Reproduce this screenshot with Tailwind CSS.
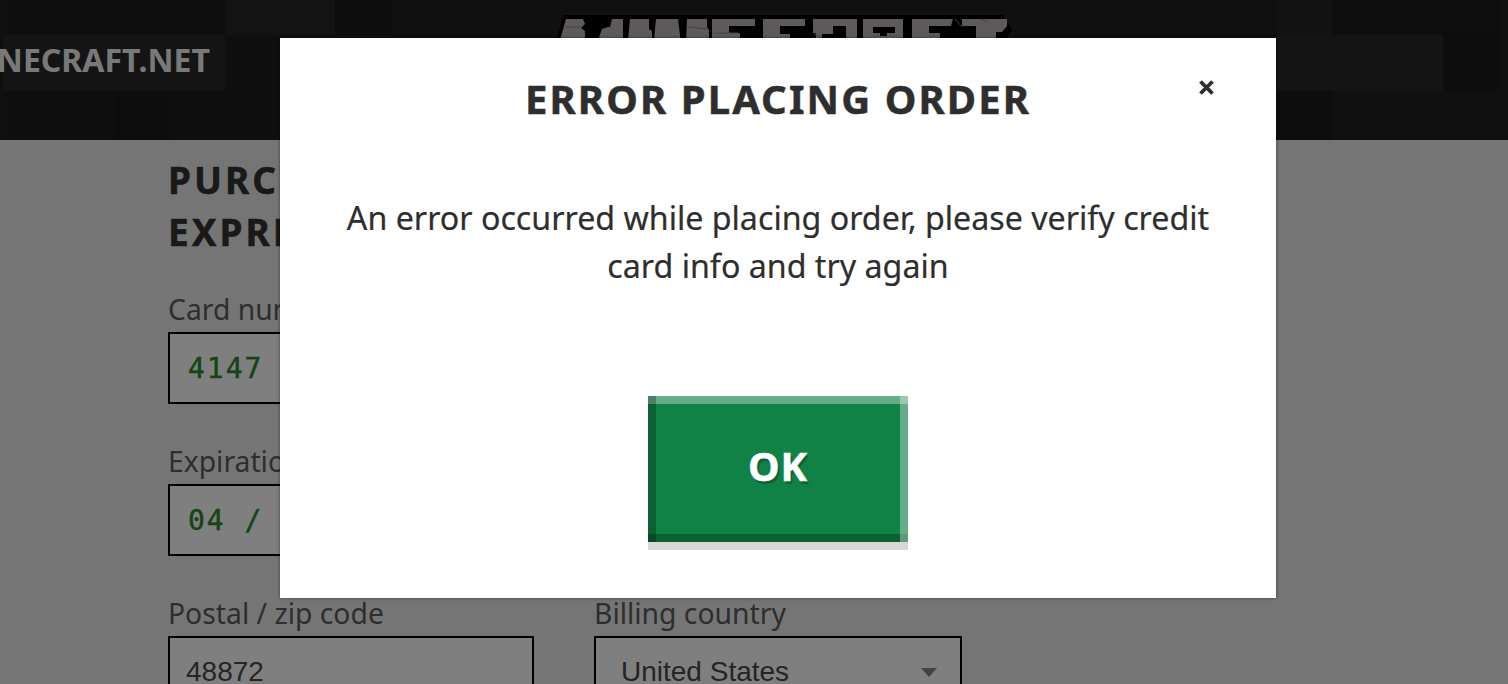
<!doctype html>
<html><head><meta charset="utf-8"><script src="https://cdn.jsdelivr.net/npm/@tailwindcss/browser@4"></script></head>
<body class="m-0">
<div class="relative w-[1508px] h-[684px] overflow-hidden bg-[#ecebeb] font-['Noto_Sans','Open_Sans',sans-serif]">
  <header class="relative h-[140px] bg-[#202020] overflow-hidden">
    <div class="absolute left-[3px] top-[-21px] grid grid-cols-[repeat(27,55.4px)] grid-rows-[repeat(3,56px)]">
      <div class="col-span-4 bg-[#1f1f1f]"></div><div class="col-span-2 bg-[#262626]"></div><div class="bg-[#1a1a1a]"></div><div class="col-span-16 bg-[#202020]"></div><div class="bg-[#252525]"></div><div class="col-span-3 bg-[#1c1c1c]"></div>
      <div class="col-span-4 bg-[#282828]"></div><div class="col-span-19 bg-[#1e1e1e]"></div><div class="col-span-3 bg-[#292929]"></div><div class="bg-[#1a1a1a]"></div>
      <div class="col-span-2 bg-[#1e1e1e]"></div><div class="bg-[#1a1a1a]"></div><div class="col-span-20 bg-[#1f1f1f]"></div><div class="bg-[#1b1b1b]"></div><div class="col-span-3 bg-[#212121]"></div>
    </div>
    <span class="absolute right-[1298px] top-[38px] text-[32px] leading-[44px] font-bold text-[#f2f2f2] whitespace-nowrap">MINECRAFT.NET</span>
    <svg class="absolute left-[550px] top-[8px]" width="470" height="32" viewBox="0 0 470 32" aria-hidden="true">
      <path fill="#000" d="M7 32L13 7H453L462 22L455 32Z"/>
      <g fill="#bcb5b2">
        <path d="M10 32L16 11H33L35 16L31 20L35 23V32Z"/>
        <path d="M48 32L52 21L58 19H60L62 11H73V32Z"/>
        <path d="M78 32L80 11H99V21L102 23V32Z"/>
        <path d="M104 32L106 11H128L130 27V32Z"/>
        <path d="M136 32L137 11H157V19L159 22V32Z"/>
        <path d="M162 32V11H205V18H179V25H190V32Z"/>
        <path d="M213 32V11H255V18H230V26H240V32Z"/>
        <path d="M263 19V11H272V32H266V25H263ZM272 11H307V32H296V18H283V26H272Z"/>
        <path fill-rule="evenodd" d="M313 32V11H353V32ZM323 19V25H330V28H337V25H345V19Z"/>
        <path d="M362 32V11H403L401 18H379V25H390V32Z"/>
        <path d="M412 18V11H457V18L452 24H446V32H426V18Z"/>
      </g>
      <g fill="none" stroke="#8a8381" stroke-width="1"><path d="M16 19H30M138 19L158 21M163 25H188M264 26L272 30M405 11L412 19M430 11L438 14"/></g>
    </svg>
  </header>
  <main class="w-[1172px] ml-[168px] pt-[14px] text-[#333]">
    <h1 class="w-[700px] text-[37px] leading-[52px] font-bold tracking-[3px] [-webkit-text-stroke:0.5px_#333]">PURCHASE WITH CREDIT CARD<br>EXPRESS CHECKOUT</h1>
    <label class="block mt-[31px] text-[28.3px] leading-[40px] text-[#5c5c5c]">Card number</label>
    <div class="mt-[3px] w-[794px] h-[72px] border-2 border-black bg-white pl-[18px] pt-[2px] flex items-center font-['DejaVu_Sans_Mono',monospace] text-[28px] tracking-[2px] text-[#2a8a2a] [-webkit-text-stroke:0.4px_#2a8a2a]">4147 2023 0000 0000</div>
    <label class="block mt-[37px] text-[28.3px] leading-[40px] text-[#5c5c5c]">Expiration date</label>
    <div class="mt-[3px] w-[794px] h-[72px] border-2 border-black bg-white pl-[18px] pt-[2px] flex items-center font-['DejaVu_Sans_Mono',monospace] text-[28px] tracking-[2px] text-[#2a8a2a] [-webkit-text-stroke:0.4px_#2a8a2a]">04 / 24</div>
    <div class="flex gap-[60px] mt-[37px]">
      <div class="w-[366px]">
        <label class="block text-[28.3px] leading-[40px] text-[#5c5c5c]">Postal / zip code</label>
        <div class="mt-[3px] h-[72px] border-2 border-black bg-white px-[16px] flex items-center font-['Liberation_Sans',sans-serif] text-[28px] text-[#4a4a4a]">48872</div>
      </div>
      <div class="w-[368px]">
        <label class="block text-[28.3px] leading-[40px] text-[#5c5c5c]">Billing country</label>
        <div class="mt-[3px] h-[72px] border-2 border-black bg-white pl-[25px] pr-[23px] flex items-center justify-between font-['Liberation_Sans',sans-serif] text-[28px] text-[#4a4a4a]">United States<span class="w-0 h-0 border-x-[8px] border-x-transparent border-t-[9px] border-t-[#888]"></span></div>
      </div>
    </div>
  </main>
  <div class="absolute inset-0 bg-black/50"></div>
  <div role="dialog" class="absolute left-[280px] top-[38px] w-[996px] h-[560px] bg-white shadow-[0_0_3px_rgba(0,0,0,0.5)] flex flex-col items-center text-[#2e2e2e]">
    <h2 class="mt-[33px] text-[40px] leading-[56px] font-bold tracking-[2.1px] [-webkit-text-stroke:0.5px_#2e2e2e]">ERROR PLACING ORDER</h2>
    <button class="absolute left-[916px] top-[36px] w-[20px] h-[26px] flex items-center justify-center">
      <svg width="17" height="17" viewBox="0 0 17 17"><path d="M2.5 2.5L14.5 14.5M14.5 2.5L2.5 14.5" stroke="#2e2e2e" stroke-width="3.8"/></svg>
    </button>
    <p class="mt-[67px] w-[900px] text-center text-[32.2px] leading-[48px] [-webkit-text-stroke:0.2px_#2e2e2e]">An error occurred while placing order, please verify credit card info and try again</p>
    <button class="mt-[106px] w-[260px] h-[146px] pb-[7px] bg-[#118245] text-white text-[40px] font-bold tracking-[1px] [-webkit-text-stroke:0.5px_#fff] [text-shadow:2px_3px_1px_#0f6236] shadow-[inset_8px_0_0_rgba(0,0,0,0.25),inset_-8px_0_0_rgba(255,255,255,0.35),inset_0_8px_0_rgba(255,255,255,0.35),inset_0_-8px_0_rgba(0,0,0,0.25),0_8px_0_#d8d8d8]">OK</button>
  </div>
</div>
</body></html>
